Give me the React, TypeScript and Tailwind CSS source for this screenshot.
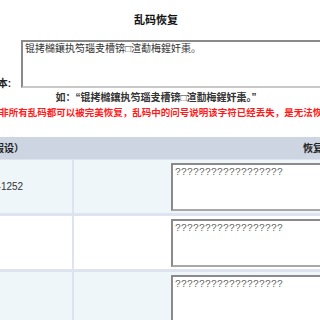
import React from 'react';

const rows = [
  { enc: 'Windows-1252', text: '??????????????????', alt: true },
  { enc: 'GBK', text: '??????????????????', alt: false },
  { enc: 'Big5', text: '??????????????????', alt: true },
];

const garbled = '锟拷檰鑲执笉瑙叏槽锛□渲勫梅鍟奸棗。';

const App: React.FC = () => {
  return (
    <div className="w-[320px] h-[320px] overflow-hidden bg-white text-[10px] text-[#222] font-['Liberation_Sans','Noto_Sans_CJK_SC',sans-serif]">
      <div className="-ml-[144px] w-[720px]">
        <div className="w-[600px] pt-[12px] text-center text-[11px] font-bold leading-[16px] text-[#111]">乱码恢复</div>

        <div className="flex items-end mt-[12px]">
          <div className="w-[155px] text-right font-bold leading-[12px] -mb-[2px]">乱码文本:</div>
          <textarea
            className="ml-[10px] w-[360px] h-[48px] resize-none border-2 border-t-[#8a8a8a] border-l-[#8a8a8a] border-r-[#c8c8c8] border-b-[#c8c8c8] px-[2px] py-[1px] text-[10px] leading-[13px] text-[#333] font-['Liberation_Mono','Noto_Sans_CJK_SC',monospace] outline-none"
            defaultValue={garbled}
          />
        </div>

        <div className="w-[600px] mt-[3px] text-center leading-[14px] font-bold text-[#333]">如：“{garbled}”</div>
        <div className="w-[600px] mt-[1px] text-center text-[9.5px] leading-[14px] font-bold text-[#ff1a1a]">
          注意：并非所有乱码都可以被完美恢复，乱码中的问号说明该字符已经丢失，是无法恢复的。
        </div>

        <div className="mt-[17px] bg-[#dde4ef]">
          <div className="flex h-[22px] items-center bg-[#cdd5e2] font-bold text-[#222]">
            <div className="w-[218px] pl-[98px]">字符集（假设）</div>
            <div className="pl-[229px]">恢复结果</div>
          </div>
          {rows.map((r) => (
            <div
              key={r.enc}
              className={`flex h-[53px] mt-[1px] border-b-2 border-[#dde4ef] box-content ${r.alt ? 'bg-[#eff6fa]' : 'bg-white'}`}
            >
              <div className="w-[216px] flex items-center pl-[101px] text-[#333]">{r.enc}</div>
              <div className="w-[2px] bg-[#dde4ef]" />
              <div className="flex-1 flex items-center pl-[97px]">
                <textarea
                  className="w-[320px] h-[48px] resize-none border-2 border-t-[#8a8a8a] border-l-[#8a8a8a] border-r-[#c8c8c8] border-b-[#a8a8a8] px-[2px] py-[1px] text-[10px] leading-[13px] text-[#666] font-['Liberation_Mono',monospace] outline-none bg-white"
                  defaultValue={r.text}
                />
              </div>
            </div>
          ))}
        </div>
      </div>
    </div>
  );
};

export default App;
